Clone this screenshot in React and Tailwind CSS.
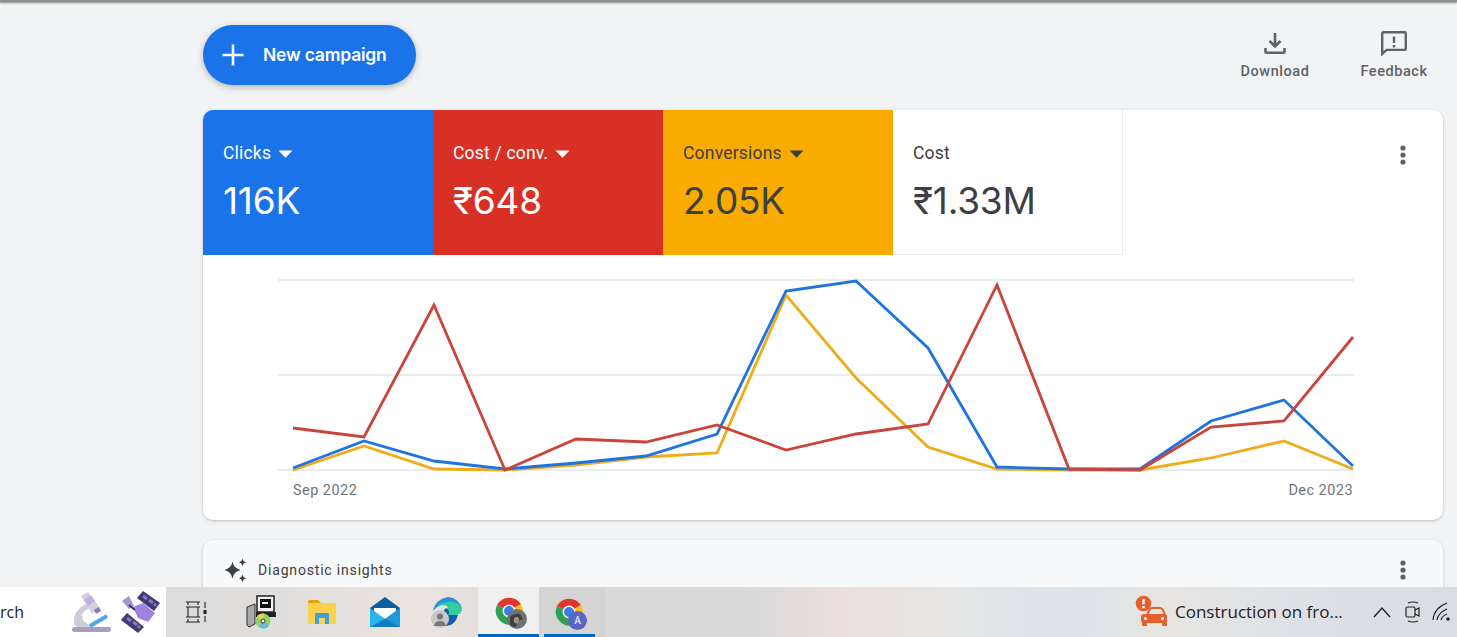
import React from "react";

const xs = [293, 364, 434, 505, 576, 646, 717, 786, 856, 928, 997, 1069, 1140, 1211, 1284, 1353];
const blue = [468, 441, 461, 469, 463, 456, 434, 291, 281, 348, 467, 469, 469, 421, 400, 466];
const red = [428, 437, 305, 470, 439, 442, 425, 450, 434, 424, 285, 469, 470, 427, 421, 337];
const yellow = [470, 446, 469, 470, 465, 457, 453, 295, 378, 447, 469, 470, 470, 458, 441, 469];
const pts = (ys) => ys.map((y, i) => `${xs[i] - 203},${y - 270}`).join(" ");

function Caret({ color }) {
  return (
    <svg width="15" height="8" viewBox="0 0 15 8" className="ml-[7px] mt-px">
      <path d="M0.5 0.5h14L7.500 7.800z" fill={color} />
    </svg>
  );
}

function Tile({ label, value, bg, text, caret, extra }) {
  return (
    <div className={`w-[230px] h-[145px] pl-5 pt-[33px] ${bg} ${text} ${extra || ""}`}>
      <div className="flex items-center h-[20px] text-[17.5px] leading-[20px] tracking-[0.2px]" style={{ fontFamily: "Roboto, sans-serif" }}>
        {label}
        {caret && <Caret color={caret} />}
      </div>
      <div className="mt-[16px] text-[37px] leading-[44px] tracking-[-0.2px]" style={{ fontFamily: "Inter, 'Noto Sans', sans-serif", fontWeight: 400 }}>
        {value}
      </div>
    </div>
  );
}

function Kebab() {
  return (
    <svg width="8" height="20" viewBox="0 0 8 20">
      <circle cx="4" cy="3" r="2.6" fill="#5f6368" />
      <circle cx="4" cy="10" r="2.6" fill="#5f6368" />
      <circle cx="4" cy="17" r="2.6" fill="#5f6368" />
    </svg>
  );
}

function ChromeIcon({ badge }) {
  return (
    <div className="relative w-[30px] h-[30px]">
      <svg width="30" height="30" viewBox="0 0 30 30" className="absolute left-0 top-0">
        <path d="M15 15 L3 9 A14 14 0 0 1 27 8 Z" fill="#e2352b" />
        <path d="M15 15 L27 8 A14 14 0 0 1 20 28 Z" fill="#f9c01c" />
        <path d="M15 15 L20 28 A14 14 0 0 1 3 9 Z" fill="#2fa04e" />
        <circle cx="15" cy="15" r="6.5" fill="#ffffff" />
        <circle cx="15" cy="15" r="5" fill="#3b7de4" />
      </svg>
      {badge === "A" ? (
        <div className="absolute left-[14px] top-[14px] w-[19px] h-[19px] rounded-full bg-[#5a64c2] text-[#d8dcf5] text-[10px] font-semibold flex items-center justify-center" style={{ fontFamily: "Roboto, sans-serif" }}>
          A
        </div>
      ) : (
        <svg width="20" height="20" viewBox="0 0 20 20" className="absolute left-[13px] top-[13px]">
          <circle cx="10" cy="10" r="10" fill="#6f7378" />
          <path d="M3 8q5-5 10-3l3 5q-2 2-5 1l-2 7q-4 0-6-3z" fill="#3d3f44" />
          <path d="M7 9q3-2 5 0l-1 5q-3 1-4-1z" fill="#a98f80" />
        </svg>
      )}
    </div>
  );
}

function Slot({ children, extra }) {
  return <div className={`w-[62px] h-full flex items-center justify-center ${extra || ""}`}>{children}</div>;
}

export default function App() {
  return (
    <div className="w-[1457px] h-[637px] flex flex-col overflow-hidden bg-[#f1f3f4]">
      <div className="h-[2px] shrink-0 bg-[#8f8f8f] shadow-[0_1px_2px_rgba(0,0,0,0.45)]" />
      <main className="flex-1 min-h-0 overflow-hidden pl-[203px] pr-[14px]">
        <div className="flex justify-between items-start h-[108px] pt-[23px]">
          <button className="w-[213px] h-[60px] rounded-[30px] bg-[#1a73e8] text-white flex items-center pl-[17px] shadow-[0_2px_6px_rgba(60,64,67,0.35)]">
            <svg width="26" height="26" viewBox="0 0 26 26">
              <path d="M13 2.5v21M2.5 13h21" stroke="#fff" strokeWidth="2.6" />
            </svg>
            <span className="ml-[17px] text-[17.5px] font-semibold tracking-[-0.2px]" style={{ fontFamily: "Inter, sans-serif" }}>New campaign</span>
          </button>
          <div className="flex pt-[5px] pr-[14px] text-[#5f6368] text-[14.5px] leading-[18px] font-medium tracking-[0.55px]" style={{ fontFamily: "Roboto, sans-serif" }}>
            <div className="w-[70px] flex flex-col items-center mr-[49px]">
              <svg width="24" height="26" viewBox="0 0 24 26" className="mb-[7px]">
                <path d="M12 3v13M6.5 11l5.5 5.5 5.5-5.5" fill="none" stroke="#5f6368" strokeWidth="2.6" />
                <path d="M2.5 18v3.5q0 1.2 1.2 1.2h16.6q1.2 0 1.2-1.2V18" fill="none" stroke="#5f6368" strokeWidth="2.6" />
              </svg>
              Download
            </div>
            <div className="w-[70px] flex flex-col items-center">
              <svg width="28" height="26" viewBox="0 0 28 26" className="mb-[7px]">
                <path d="M2.2 24V3.5q0-1.2 1.2-1.2h21.2q1.2 0 1.2 1.2v15.2q0 1.2-1.2 1.2H6.5z" fill="none" stroke="#5f6368" strokeWidth="2.4" />
                <path d="M14 6.5v6.5M14 15v2.6" stroke="#5f6368" strokeWidth="2.4" />
              </svg>
              Feedback
            </div>
          </div>
        </div>

        <section className="h-[410px] rounded-[10px] bg-white shadow-[0_1px_3px_rgba(60,64,67,0.3)] overflow-hidden">
          <div className="flex items-start">
            <Tile label="Clicks" value="116K" bg="bg-[#1a73e8]" text="text-white" caret="#ffffff" />
            <Tile label="Cost / conv." value="₹648" bg="bg-[#d93025]" text="text-white" caret="#ffffff" />
            <Tile label="Conversions" value="2.05K" bg="bg-[#f9ab00]" text="text-[#3c4043]" caret="#3c4043" />
            <Tile label="Cost" value="₹1.33M" bg="bg-white" text="text-[#3c4043]" extra="border-r border-b border-[#e8eaed]" />
            <div className="flex-1 flex justify-end pt-[35px] pr-[36px]">
              <Kebab />
            </div>
          </div>
          <svg width="1240" height="205" viewBox="0 0 1240 205" className="block mt-[15px]">
            <path d="M75 10H1151M75 105H1151M75 200H1151" stroke="#e3e5e8" strokeWidth="1.6" fill="none" />
            <polyline points={pts(yellow)} fill="none" stroke="#f0ab18" strokeWidth="2.8" />
            <polyline points={pts(blue)} fill="none" stroke="#1f74e0" strokeWidth="2.8" />
            <polyline points={pts(red)} fill="none" stroke="#c9443a" strokeWidth="2.8" />
          </svg>
          <div className="mt-[7px] flex justify-between pl-[90px] pr-[90px] text-[14.5px] leading-[18px] tracking-[0.45px] text-[#70757a]" style={{ fontFamily: "Roboto, sans-serif" }}>
            <span>Sep 2022</span>
            <span>Dec 2023</span>
          </div>
        </section>

        <section className="mt-[20px] h-[100px] rounded-[10px] bg-[#f8f9fa] shadow-[0_1px_3px_rgba(60,64,67,0.25)] flex items-start justify-between pl-[20px] pr-[36px] pt-[18px]">
          <div className="flex items-center h-[24px]">
            <svg width="25" height="25" viewBox="0 0 25 25">
              <path d="M9.5 3.5q1.2 6.8 8 8.5-6.8 1.7-8 8.5-1.2-6.8-8-8.5 6.8-1.700 8-8.500z" fill="#3c4043" />
              <path d="M19.500 0.500q.6 3.200 3.500 3.800-2.900.7-3.500 3.800-.6-3.100-3.500-3.800 2.900-.6 3.500-3.800zM19.500 16.500q.6 3.200 3.500 3.800-2.900.7-3.500 3.800-.6-3.100-3.500-3.800 2.900-.6 3.500-3.800z" fill="#3c4043" />
            </svg>
            <span className="ml-[10px] text-[14px] tracking-[0.82px] text-[#3c4043]" style={{ fontFamily: "Roboto, sans-serif" }}>Diagnostic insights</span>
          </div>
          <div className="pt-[2px]"><Kebab /></div>
        </section>
      </main>

      <footer className="relative z-10 h-[50px] shrink-0 flex items-center bg-[linear-gradient(90deg,#dcdcdc_0%,#dcdcdc_12%,#e1dfdd_20%,#ebe3df_29%,#e3dfdc_33%,#d9d9da_42%,#dadada_52%,#ecdfdb_58%,#e6e4e2_63%,#e4e5e5_66%,#dce3ea_71%,#dde3e9_74%,#e7e5e2_80%,#dde1e6_89%,#d8dde2_100%)]">
        <div className="w-[166px] h-full bg-white flex items-center overflow-hidden">
          <span className="w-[70px] shrink-0 text-[16px] text-[#222]" style={{ fontFamily: "'Open Sans', sans-serif" }}>
            rch
          </span>
          <svg width="46" height="44" viewBox="0 0 46 44" className="shrink-0">
            <rect x="2" y="37" width="39" height="5" rx="2.500" fill="#a99fc0" />
            <path d="M15 14Q3 22 4 32q0 5 6 5h14q-12-4-12-11 0-5 8-8z" fill="#d0ccd8" />
            <path d="M11 6l7-4 12 16-8 6z" fill="#d5d0dd" />
            <path d="M14 10l7-5 4 6-7 5z" fill="#c0b0e4" />
            <path d="M24 20l5-3 2 4-5 3z" fill="#8a7cb0" />
            <path d="M20 36L37 26" stroke="#4fa8ea" strokeWidth="4" />
          </svg>
          <svg width="44" height="46" viewBox="0 0 44 46" className="shrink-0 ml-[2px]">
            <path d="M19 9l6-7 17 12-6 8z" fill="#43386e" />
            <path d="M25 7l4 3M31 11l4 3M36 15l2 1.500" stroke="#8577c8" strokeWidth="3" />
            <path d="M3 31l6-7 17 14-6 6z" fill="#43386e" />
            <path d="M9 29l4 3M15 33l4 3M20 37l2 1.500" stroke="#8577c8" strokeWidth="3" />
            <path d="M15 18l10-4 12 10-7 9-10-4z" fill="#9f82dd" />
            <path d="M4 12l7-5 5 10-5 3z" fill="#a892d8" />
            <path d="M11 16l6 5" stroke="#3b3160" strokeWidth="2" />
          </svg>
        </div>

        <Slot>
          <svg width="24" height="24" viewBox="0 0 24 24" fill="none" stroke="#222" strokeWidth="1.100">
            <path d="M1 2h14M1 22h14M3 7h10v10H3zM1 7h14M1 17h14M3 2v3M13 2v3M3 19v3M13 19v3" />
            <path d="M20 2v6M20 16v6" />
            <rect x="18.500" y="10" width="3" height="4" fill="#222" stroke="none" />
          </svg>
        </Slot>
        <Slot>
          <svg width="32" height="34" viewBox="0 0 32 34" className="ml-[5px]">
            <path d="M1 12l8-3v20l-6 3-2-2z" fill="#a8a8a8" stroke="#333" strokeWidth="1" />
            <rect x="11" y="1" width="17" height="16" fill="#f4f4f4" stroke="#222" strokeWidth="1.500" />
            <rect x="14" y="4" width="11" height="9" fill="#111" />
            <path d="M16 7h6v2h-6z" fill="#eee" />
            <path d="M10 17h20v5H10z" fill="#222" />
            <circle cx="17" cy="26" r="7.500" fill="#8fd36a" />
            <path d="M17 26L11 21a7.500 7.500 0 0 1 7-2.400z" fill="#e7d65a" />
            <path d="M17 26l6 5a7.500 7.500 0 0 1-10 1z" fill="#6bb7d8" />
            <circle cx="17" cy="26" r="2" fill="#fff" stroke="#333" />
          </svg>
        </Slot>
        <Slot>
          <svg width="30" height="26" viewBox="0 0 30 26" className="ml-[2px]">
            <path d="M1 3q0-2 2-2h8l3 3h-13z" fill="#e8a100" />
            <path d="M1 4h28v20q0 1-1 1H2q-1 0-1-1z" fill="#fbd24e" />
            <path d="M8 25V15q0-1 1-1h12q1 0 1 1v10h-4v-6h-6v6z" fill="#3f9fdb" />
          </svg>
        </Slot>
        <Slot>
          <svg width="32" height="30" viewBox="0 0 32 30" className="ml-[4px]">
            <path d="M1 11L16 0l15 11v5H1z" fill="#0f5e9e" />
            <path d="M5 11h22v10H5z" fill="#ffffff" />
            <path d="M1 11l15 11 15-11v19H1z" fill="#2bb3ee" />
            <path d="M16 22l15 8V11z" fill="#1c9ad8" />
            <path d="M1 30l15-8 15 8z" fill="#0e7cc2" />
          </svg>
        </Slot>
        <Slot>
          <div className="relative w-[32px] h-[34px] ml-[3px]">
            <svg width="32" height="34" viewBox="0 0 32 34" className="absolute left-0 top-0">
              <path d="M2 16A15 15 0 0 1 31 13q0 7-7 7H13q5-7 3-9-7-3-14 5z" fill="#2ecf9c" />
              <path d="M2 16Q5 4 17 2 26 2 31 13 25 5 16 7 7 8 2 16z" fill="#2b8fdc" />
              <path d="M10 24q2-9 5-11 5 3 2 7h10q-3 11-12 11-4 0-5-7z" fill="#0f5fb0" />
            </svg>
            <svg width="18" height="18" viewBox="0 0 18 18" className="absolute left-0 top-[15px]">
              <circle cx="9" cy="9" r="9" fill="#c9c9c9" />
              <circle cx="9" cy="6.500" r="3" fill="#777" />
              <path d="M3 16q1-5 6-5t6 5z" fill="#777" />
            </svg>
          </div>
        </Slot>
        <div className="ml-[2px] w-[61px] h-full bg-[#f0f0f0] flex items-center justify-center border-b-[3px] border-[#0067c0]">
          <ChromeIcon />
        </div>
        <div className="w-[66px] h-full bg-[#d4d4d4] flex items-center justify-center pr-[6px] relative">
          <ChromeIcon badge="A" />
          <div className="absolute left-[5px] bottom-0 w-[51px] h-[3px] bg-[#0067c0]" />
        </div>

        <div className="flex-1" />
        <svg width="36" height="36" viewBox="0 0 36 36" className="mr-[4px] shrink-0">
          <circle cx="8.500" cy="9.500" r="7.800" fill="#e4602c" />
          <path d="M8.500 5v5.500M8.500 12v2.200" stroke="#fff" strokeWidth="2.400" />
          <path d="M12 21l3-6q1-1 3-1h7q2 0 3 2l2 5" fill="none" stroke="#e4602c" strokeWidth="2" />
          <rect x="6" y="20" width="26" height="9" rx="3" fill="#e4602c" />
          <rect x="7" y="28" width="5" height="4" rx="1" fill="#e4602c" />
          <rect x="27" y="28" width="5" height="4" rx="1" fill="#e4602c" />
          <circle cx="10.500" cy="24.500" r="1.500" fill="#fff" />
          <circle cx="27.500" cy="24.500" r="1.500" fill="#fff" />
        </svg>
        <span className="w-[185px] shrink-0 text-[17px] text-[#222]" style={{ fontFamily: "'Open Sans', sans-serif" }}>Construction on fro...</span>
        <svg width="18" height="12" viewBox="0 0 18 12" fill="none" stroke="#222" strokeWidth="1.400" className="ml-[13px] shrink-0">
          <path d="M1 11l8-9 8 9" />
        </svg>
        <svg width="16" height="22" viewBox="0 0 16 22" fill="none" stroke="#222" strokeWidth="1.200" className="ml-[14px] shrink-0">
          <path d="M3 2q5-2 10 0M3 20q5 2 10 0" />
          <rect x="1" y="6" width="9" height="10" rx="1.500" />
          <path d="M10 9l4-2v8l-4-2" />
        </svg>
        <svg width="20" height="20" viewBox="0 0 20 20" fill="none" stroke="#222" strokeWidth="1.200" className="ml-[11px] mr-[5px] shrink-0">
          <path d="M1 18Q2 6 15 1M5 18q1-7 10-11M9 18q1-4 6-6" />
          <circle cx="16" cy="17" r="1.800" fill="#222" stroke="none" />
        </svg>
      </footer>
    </div>
  );
}
